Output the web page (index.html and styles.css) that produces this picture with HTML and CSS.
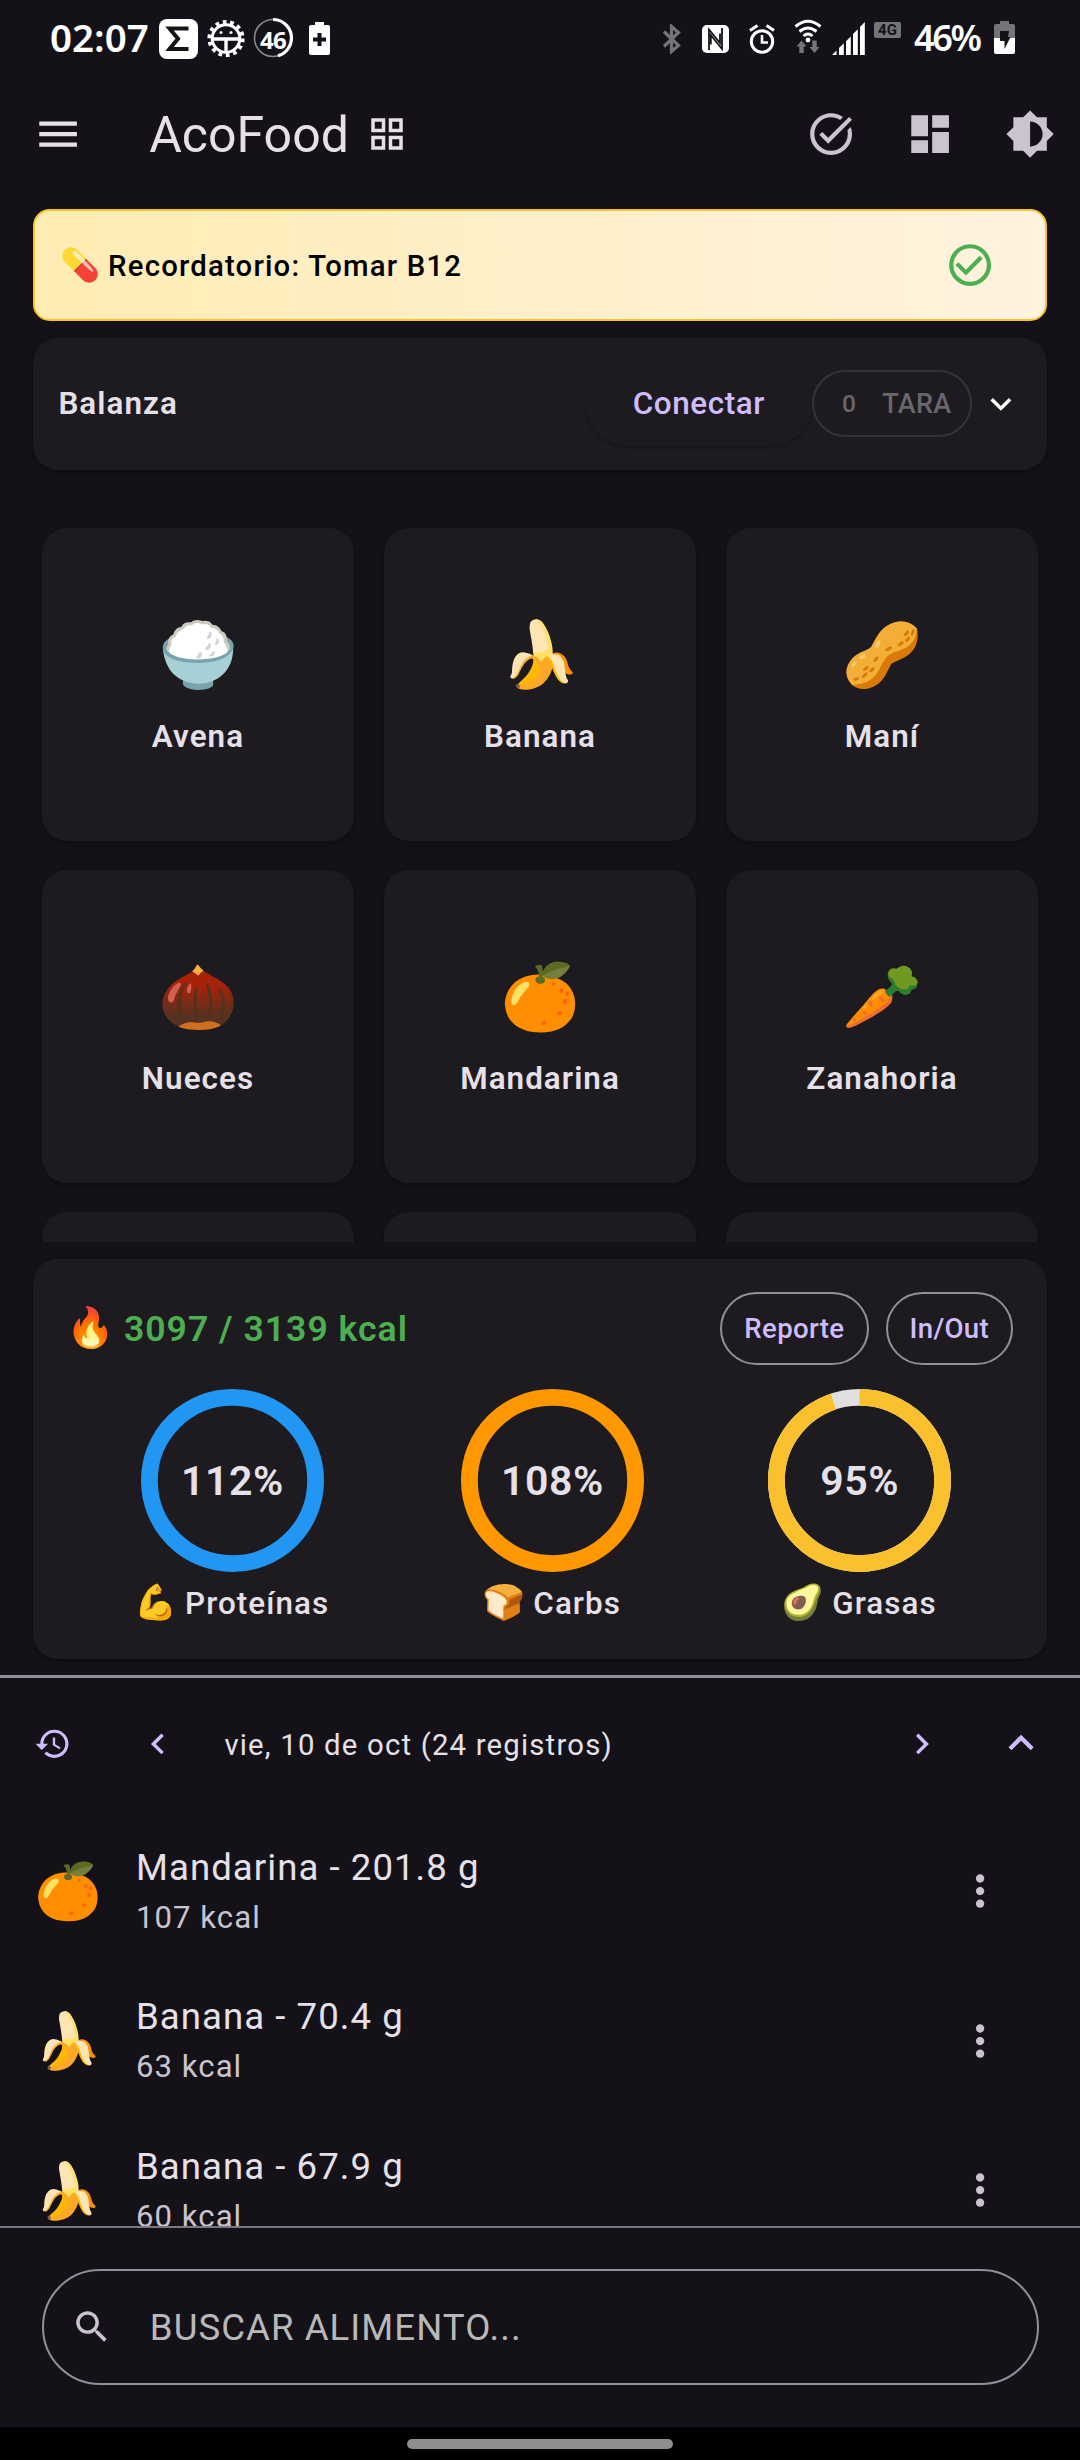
FILE: index.html
```html
<!DOCTYPE html>
<html lang="es">
<head>
<meta charset="utf-8">
<title>AcoFood</title>
<link rel="stylesheet" href="styles.css">
</head>
<body>
<div class="screen">

  <div class="status">
    <div class="status-left">
      <span class="clock">02:07</span>
      <svg class="s-sigma" width="39" height="40" viewBox="0 0 39 40"><rect width="39" height="40" rx="8" fill="#fff"/><path d="M29.500 9.500H10.500L19 19.800L10.500 30H29.500" fill="none" stroke="#141218" stroke-width="4"/></svg>
      <svg class="s-gear" width="38" height="39" viewBox="-19 -19.500 38 39"><circle r="13.800" fill="none" stroke="#fff" stroke-width="3"/><circle r="16.600" fill="none" stroke="#fff" stroke-width="4" stroke-dasharray="3.700 3.750"/><path d="M-13 0.500H13M0 0V13" stroke="#fff" stroke-width="3.400"/><circle cx="-5" cy="-6" r="1.500" fill="#fff"/><circle cx="5" cy="-6" r="1.500" fill="#fff"/></svg>
      <span class="s-ring"><svg width="40" height="42" viewBox="-20 -21 40 42"><circle r="18.500" fill="none" stroke="#8a898c" stroke-width="1.600"/><path d="M0 -18.500A18.500 18.500 0 0 1 5 17.800" fill="none" stroke="#fff" stroke-width="3.200"/></svg><b>46</b></span>
      <svg class="s-bat" width="21" height="33" viewBox="0 0 21 33"><path d="M6 0h9v3h4q2 0 2 2v26q0 2-2 2H2q-2 0-2-2V5q0-2 2-2h4z" fill="#fff"/><path d="M10.500 11v13M4 17.500h13" stroke="#141218" stroke-width="4"/></svg>
    </div>
    <div class="status-right">
      <svg class="s-bt" width="20" height="30" viewBox="0 0 20 30"><path d="M2 7.500L16.500 21.500L9.500 27.500V2.500L16.500 8.500L2 22.500" fill="none" stroke="#757477" stroke-width="3.200"/></svg>
      <svg class="s-nfc" width="27" height="28" viewBox="0 0 27 28"><rect width="27" height="28" rx="5" fill="#fff"/><path d="M7 25V4.500L18 18V8.500" fill="none" stroke="#141218" stroke-width="1.800"/><path d="M8.500 10V19L20 24V3" fill="none" stroke="#141218" stroke-width="0"/><path d="M20 3V24L8.800 10V19.500" fill="none" stroke="#141218" stroke-width="1.800"/></svg>
      <svg class="s-alarm" width="26" height="30" viewBox="0 0 26 30"><circle cx="13" cy="17.500" r="10.700" fill="none" stroke="#fff" stroke-width="3"/><path d="M13 11v7.500h6" fill="none" stroke="#fff" stroke-width="2.600"/><path d="M1 6.500L8.500 1.500M25 6.500L17.500 1.500" stroke="#fff" stroke-width="3"/></svg>
      <svg class="s-wifi" width="28" height="35" viewBox="0 0 28 35"><g fill="none" stroke="#fff" stroke-width="3"><path d="M1.500 7.500Q14 -3 26.500 7.500"/><path d="M5.500 12.500Q14 5.500 22.500 12.500"/><path d="M9.500 17Q14 13 18.500 17"/></g><circle cx="14" cy="21" r="2.400" fill="#fff"/><path d="M7.500 21.500l5 6H9.700V34H5.300v-6.500H2.500zM20.500 34l-5-6h2.800v-6.500h4.400V28h2.800z" fill="#757477"/></svg>
      <svg class="s-sig" width="33" height="33" viewBox="0 0 33 33"><path d="M0 33l4.500-4.500V33zM7 26l4.800-4.800V33H7zM14 19.200l4.800-4.800V33H14zM21 12l4.800-4.800V33H21zM28 5l4.800-5V33H28z" fill="#fff"/></svg>
      <span class="net">4G</span>
      <span class="pct">46%</span>
      <svg class="s-bat2" width="21" height="33" viewBox="0 0 21 33"><path d="M6 0h9v3h4q2 0 2 2v12H0V5q0-2 2-2h4z" fill="#757477"/><path d="M0 17h21v14q0 2-2 2H2q-2 0-2-2z" fill="#fff"/><path d="M6 10h9l-1 6h2.500L10.500 28v-8H6z" fill="#141218"/></svg>
    </div>
  </div>

  <header class="appbar">
    <svg class="menu" width="50.200" height="50.200" viewBox="0 0 24 24"><path d="M3 18h18v-2H3zm0-5h18v-2H3zm0-7v2h18V6z"/></svg>
    <h1>AcoFood</h1>
    <svg class="gridview" width="42" height="42" viewBox="0 0 24 24"><path fill-rule="evenodd" d="M3 3v8h8V3zm6 6H5V5h4zm-6 4v8h8v-8zm6 6H5v-4h4zM13 3v8h8V3zm6 6h-4V5h4zm-6 4v8h8v-8zm6 6h-4v-4h4z"/></svg>
    <nav class="actions">
      <svg width="50.200" height="50.200" viewBox="0 0 24 24"><path d="M22 5.180L10.590 16.600l-4.240-4.240 1.410-1.410 2.830 2.830 10-10L22 5.180zM19.790 10.220C19.920 10.790 20 11.390 20 12c0 4.420-3.580 8-8 8s-8-3.580-8-8 3.580-8 8-8c1.580 0 3.040.46 4.280 1.250l1.440-1.440C16.100 2.670 14.130 2 12 2 6.480 2 2 6.480 2 12s4.480 10 10 10 10-4.480 10-10c0-1.190-.22-2.330-.6-3.390l-1.610 1.610z"/></svg>
      <svg width="50.200" height="50.200" viewBox="0 0 24 24"><path d="M3 13h8V3H3v10zm0 8h8v-6H3v6zm10 0h8V11h-8v10zm0-18v6h8V3h-8z"/></svg>
      <svg width="50.200" height="50.200" viewBox="0 0 24 24"><path d="M20 15.310L23.310 12 20 8.690V4h-4.690L12 .69 8.690 4H4v4.690L.69 12 4 15.310V20h4.690L12 23.310 15.310 20H20v-4.690zM12 18V6c3.310 0 6 2.690 6 6s-2.690 6-6 6z"/></svg>
    </nav>
  </header>

  <section class="reminder">
    <span class="reminder-text"><i class="em">💊</i> Recordatorio: Tomar B12</span>
    <svg width="50.200" height="50.200" viewBox="0 0 24 24"><path d="M16.590 7.580L10 14.170l-3.590-3.580L5 12l5 5 8-8zM12 2C6.480 2 2 6.480 2 12s4.480 10 10 10 10-4.480 10-10S17.520 2 12 2zm0 18c-4.420 0-8-3.580-8-8s3.580-8 8-8 8 3.580 8 8-3.580 8-8 8z"/></svg>
  </section>

  <section class="scale card">
    <span class="scale-title">Balanza</span>
    <button class="connect">Conectar</button>
    <button class="tare"><small>0</small><span>TARA</span></button>
    <svg class="expand" width="41.800" height="41.800" viewBox="0 0 24 24"><path d="M7.410 8.590L12 13.170l4.590-4.580L18 10l-6 6-6-6 1.410-1.410z"/></svg>
  </section>

  <section class="foods">
    <div class="tile"><span class="emoji">🍚</span><span class="name">Avena</span></div>
    <div class="tile"><span class="emoji">🍌</span><span class="name">Banana</span></div>
    <div class="tile"><span class="emoji">🥜</span><span class="name">Maní</span></div>
    <div class="tile"><span class="emoji">🌰</span><span class="name">Nueces</span></div>
    <div class="tile"><span class="emoji">🍊</span><span class="name">Mandarina</span></div>
    <div class="tile"><span class="emoji">🥕</span><span class="name">Zanahoria</span></div>
    <div class="tile"></div>
    <div class="tile"></div>
    <div class="tile"></div>
  </section>

  <section class="stats card">
    <div class="stats-head">
      <span class="kcal"><i class="em">🔥</i> 3097 / 3139 kcal</span>
      <button class="outlined">Reporte</button>
      <button class="outlined">In/Out</button>
    </div>
    <div class="macros">
      <div class="macro">
        <div class="ring"><svg width="183" height="183" viewBox="0 0 183 183"><circle cx="91.500" cy="91.500" r="83.100" fill="none" stroke="#2196f3" stroke-width="16.800"/></svg><b>112%</b></div>
        <span><i class="em">💪</i> Proteínas</span>
      </div>
      <div class="macro">
        <div class="ring"><svg width="183" height="183" viewBox="0 0 183 183"><circle cx="91.500" cy="91.500" r="83.100" fill="none" stroke="#ff9800" stroke-width="16.800"/></svg><b>108%</b></div>
        <span><i class="em">🍞</i> Carbs</span>
      </div>
      <div class="macro">
        <div class="ring"><svg width="183" height="183" viewBox="0 0 183 183"><circle cx="91.500" cy="91.500" r="83.100" fill="none" stroke="#e0e0e0" stroke-width="16.800"/><circle cx="91.500" cy="91.500" r="83.100" fill="none" stroke="#fbc02d" stroke-width="16.800" pathLength="100" stroke-dasharray="94.900 100" transform="rotate(-90 91.500 91.500)"/></svg><b>95%</b></div>
        <span><i class="em">🥑</i> Grasas</span>
      </div>
    </div>
  </section>

  <section class="log">
    <div class="log-head">
      <svg class="history" width="37.600" height="37.600" viewBox="0 0 24 24"><path d="M13 3c-4.970 0-9 4.030-9 9H1l3.890 3.890.07.14L9 12H6c0-3.870 3.130-7 7-7s7 3.130 7 7-3.130 7-7 7c-1.930 0-3.680-.79-4.940-2.060l-1.420 1.420C8.270 19.990 10.510 21 13 21c4.970 0 9-4.030 9-9s-4.030-9-9-9zm-1 5v5l4.280 2.540.72-1.210-3.500-2.080V8H12z"/></svg>
      <svg class="prev" width="41.800" height="41.800" viewBox="0 0 24 24"><path d="M15.410 7.410L14 6l-6 6 6 6 1.410-1.410L10.830 12z"/></svg>
      <span class="date">vie, 10 de oct (24 registros)</span>
      <svg class="next" width="41.800" height="41.800" viewBox="0 0 24 24"><path d="M10 6L8.590 7.410 13.170 12l-4.580 4.590L10 18l6-6z"/></svg>
      <svg class="up" width="50.200" height="50.200" viewBox="0 0 24 24"><path d="M12 8l-6 6 1.410 1.410L12 10.830l4.590 4.580L18 14z"/></svg>
    </div>
    <ul class="entries">
      <li><span class="pic">🍊</span><div class="txt"><p>Mandarina - 201.8 g</p><small>107 kcal</small></div><svg width="50.200" height="50.200" viewBox="0 0 24 24"><path d="M12 8c1.100 0 2-.9 2-2s-.9-2-2-2-2 .9-2 2 .9 2 2 2zm0 2c-1.100 0-2 .9-2 2s.9 2 2 2 2-.9 2-2-.9-2-2-2zm0 6c-1.100 0-2 .9-2 2s.9 2 2 2 2-.9 2-2-.9-2-2-2z"/></svg></li>
      <li><span class="pic">🍌</span><div class="txt"><p>Banana - 70.4 g</p><small>63 kcal</small></div><svg width="50.200" height="50.200" viewBox="0 0 24 24"><path d="M12 8c1.100 0 2-.9 2-2s-.9-2-2-2-2 .9-2 2 .9 2 2 2zm0 2c-1.100 0-2 .9-2 2s.9 2 2 2 2-.9 2-2-.9-2-2-2zm0 6c-1.100 0-2 .9-2 2s.9 2 2 2 2-.9 2-2-.9-2-2-2z"/></svg></li>
      <li><span class="pic">🍌</span><div class="txt"><p>Banana - 67.9 g</p><small>60 kcal</small></div><svg width="50.200" height="50.200" viewBox="0 0 24 24"><path d="M12 8c1.100 0 2-.9 2-2s-.9-2-2-2-2 .9-2 2 .9 2 2 2zm0 2c-1.100 0-2 .9-2 2s.9 2 2 2 2-.9 2-2-.9-2-2-2zm0 6c-1.100 0-2 .9-2 2s.9 2 2 2 2-.9 2-2-.9-2-2-2z"/></svg></li>
    </ul>
  </section>

  <section class="search">
    <div class="field">
      <svg width="41.800" height="41.800" viewBox="0 0 24 24"><path d="M15.500 14h-.79l-.28-.27C15.410 12.590 16 11.110 16 9.500 16 5.910 13.090 3 9.500 3S3 5.910 3 9.500 5.910 16 9.500 16c1.610 0 3.090-.59 4.230-1.570l.27.28v.79l5 4.990L20.490 19l-4.990-5zm-6 0C7.010 14 5 11.990 5 9.500S7.010 5 9.500 5 14 7.010 14 9.500 11.990 14 9.500 14z"/></svg>
      <span>BUSCAR ALIMENTO...</span>
    </div>
  </section>

  <footer class="navbar"><div class="handle"></div></footer>
</div>
</body>
</html>
```
FILE: styles.css
```css
* { box-sizing: border-box; margin: 0; padding: 0; }

body {
  background: #141218;
  color: #e6e0e9;
  font-family: Roboto, "Noto Color Emoji", sans-serif;
}

svg { display: block; flex: none; fill: currentColor; }
button { background: none; border: 0; color: inherit; font: inherit; flex: none; }

.screen {
  width: 1080px;
  height: 2460px;
  display: flex;
  flex-direction: column;
  overflow: hidden;
}
.screen > * { flex: none; }

/* inline emoji, slightly larger than the text beside it */
.em { font-size: 1.1em; font-style: normal; line-height: 1; margin: 0 -1.800px; }

/* status bar */
.status {
  height: 76px;
  display: flex;
  justify-content: space-between;
  color: #fff;
  font-family: "Noto Sans", sans-serif;
}
.status-left, .status-right { display: flex; align-items: flex-start; }
.status-left { padding-left: 50px; }
.status-right { padding-right: 65px; }
.clock { width: 109px; font-size: 38.500px; font-weight: 600; line-height: 53px; letter-spacing: 0; margin-top: 11px; }
.s-sigma { margin-top: 19px; }
.s-gear { margin: 19px 0 0 9px; }
.s-ring { display: grid; margin: 17px 0 0 8px; }
.s-ring > * { grid-area: 1 / 1; }
.s-ring b { place-self: center; font-size: 24px; line-height: 42px; font-weight: 700; letter-spacing: -0.800px; margin-top: 2px; }
.s-bat { margin: 22px 0 0 16px; }
.s-bt { margin: 24px 20px 0 0; }
.s-nfc { margin: 25px 20px 0 0; }
.s-alarm { margin: 24px 19px 0 0; }
.s-wifi { margin: 19px 10px 0 0; }
.s-sig { margin: 22px 9px 0 0; }
.net {
  width: 27px;
  height: 16px;
  margin: 22px 13px 0 0;
  border-radius: 2px;
  background: #757477;
  color: #141218;
  font: 700 15px/16px Roboto, sans-serif;
  text-align: center;
}
.pct { width: 80px; font-size: 36px; font-weight: 600; line-height: 50px; letter-spacing: -2.400px; margin-top: 12.500px; }
.s-bat2 { margin-top: 21px; }

/* app bar */
.appbar { height: 116px; display: flex; align-items: center; padding: 0 25px 0 33px; }
.appbar h1 { margin-left: 66px; width: 217px; font-size: 50px; font-weight: 400; line-height: 60px; padding-top: 1px; }
.actions { margin-left: auto; display: flex; gap: 49.300px; color: #cac4d0; }

/* reminder banner */
.reminder {
  margin: 16.500px 33.400px 0;
  height: 112px;
  display: flex;
  align-items: center;
  justify-content: space-between;
  padding: 0 49.500px 0 26.500px;
  border: 2px solid #fac22d;
  border-radius: 16.700px;
  background: linear-gradient(90deg, #ffecb3, #fff3e0);
  color: #000;
  font-size: 29.300px;
  font-weight: 500;
  letter-spacing: 1.200px;
}
.reminder svg { color: #4caf50; margin-top: 1px; }
.reminder-text { line-height: 40px; padding-top: 2px; }

/* cards */
.card {
  margin: 0 33.400px;
  border-radius: 25px;
  background: #1d1b20;
  box-shadow: 0 2px 4px rgba(0, 0, 0, 0.3);
}

.scale { margin-top: 17px; height: 132.500px; display: flex; align-items: center; padding: 0 24px; }
.scale-title { flex: 1; font-size: 31.400px; font-weight: 600; letter-spacing: 1.050px; padding-left: 1px; }
.connect {
  width: 226px;
  height: 84px;
  border-radius: 42px;
  box-shadow: 0 2px 3px rgba(0, 0, 0, 0.22);
  color: #d0bcff;
  font-size: 31.400px;
  font-weight: 500;
  letter-spacing: 0.600px;
}
.tare {
  width: 160px;
  height: 67px;
  border: 2px solid #35333a;
  border-radius: 34px;
  color: #69666c;
  display: flex;
  align-items: center;
  justify-content: center;
  gap: 26px;
  font-size: 27px;
  font-weight: 500;
  letter-spacing: 0.300px;
  padding-left: 10px;
}
.tare small { font-size: 24.500px; }
.expand { margin: 0 1px 0 8px; color: #fff; }

/* food grid */
.foods {
  height: 771.500px;
  padding: 58px 41.600px 0;
  display: grid;
  grid-template-columns: repeat(3, 312.800px);
  grid-auto-rows: 313px;
  justify-content: space-between;
  row-gap: 29px;
  overflow: hidden;
}
.tile {
  display: flex;
  flex-direction: column;
  align-items: center;
  justify-content: center;
  gap: 24px;
  padding-top: 5px;
  border-radius: 25px;
  background: #1d1b20;
  box-shadow: 0 2px 4px rgba(0, 0, 0, 0.3);
}
.emoji { font-size: 64.400px; line-height: 76px; }
.name { font-size: 31.400px; font-weight: 600; line-height: 40px; letter-spacing: 1.050px; }

/* daily totals */
.stats { margin-top: 17px; height: 400px; padding: 33px 33.500px 0; }
.stats-head { display: flex; align-items: center; gap: 17px; height: 73px; }
.kcal { flex: 1; color: #4caf50; font-size: 35.600px; font-weight: 600; letter-spacing: 1px; line-height: 46px; padding: 2px 0 0 1px; }
.outlined {
  height: 73px;
  padding: 0 22px;
  border: 2px solid #938f99;
  border-radius: 37px;
  color: #d0bcff;
  font-size: 27.600px;
  font-weight: 500;
  letter-spacing: 0.350px;
}
.macros { display: grid; grid-template-columns: 320px 320px 294.600px; margin: 24px 0 0 5.600px; }
.macro { display: flex; flex-direction: column; align-items: center; }
.macro > span { margin-top: 12px; font-size: 31.400px; line-height: 40px; font-weight: 500; letter-spacing: 1.050px; white-space: nowrap; }
.ring { display: grid; place-items: center; }
.ring > * { grid-area: 1 / 1; }
.ring b { font-size: 41px; font-weight: 600; letter-spacing: 0.600px; padding-top: 2px; }

/* log */
.log { margin-top: 16px; height: 551px; border-top: 3px solid #938f99; overflow: hidden; }
.log-head { display: flex; align-items: center; height: 132px; padding-left: 34px; }
.log-head svg { color: #d0bcff; }
.prev { margin-left: 65.500px; }
.date { margin-left: 45.500px; width: 676.500px; font-size: 29.300px; letter-spacing: 1.200px; padding-top: 3px; }
.up { margin-left: 53px; }
.entries { list-style: none; padding-top: 6.800px; }
.entries li { display: flex; align-items: center; height: 149.700px; padding: 0 74.600px 0 33.500px; color: #cac4d0; }
.pic { width: 69px; font-size: 54.500px; line-height: 70px; display: flex; justify-content: center; }
.txt { flex: 1; margin-left: 33.500px; padding-top: 3px; }
.txt p { color: #e6e0e9; font-size: 36.600px; line-height: 50px; letter-spacing: 1.050px; }
.txt small { display: block; font-size: 31.100px; line-height: 50px; letter-spacing: 1.050px; }

/* search */
.search { height: 201px; border-top: 2px solid #7b7781; padding: 41.500px 41.500px 0; }
.field {
  height: 116px;
  display: flex;
  align-items: center;
  gap: 37.500px;
  padding-left: 27px;
  border: 2px solid #938f99;
  border-radius: 58px;
  color: #cac4d0;
}
.field span { color: #b9b8b9; font-size: 36.600px; letter-spacing: 1.050px; }

/* gesture bar */
.navbar { flex: 1; background: #000; display: flex; justify-content: center; padding-top: 12px; }
.handle { width: 266px; height: 10px; border-radius: 5px; background: #8e8e8e; }
```
